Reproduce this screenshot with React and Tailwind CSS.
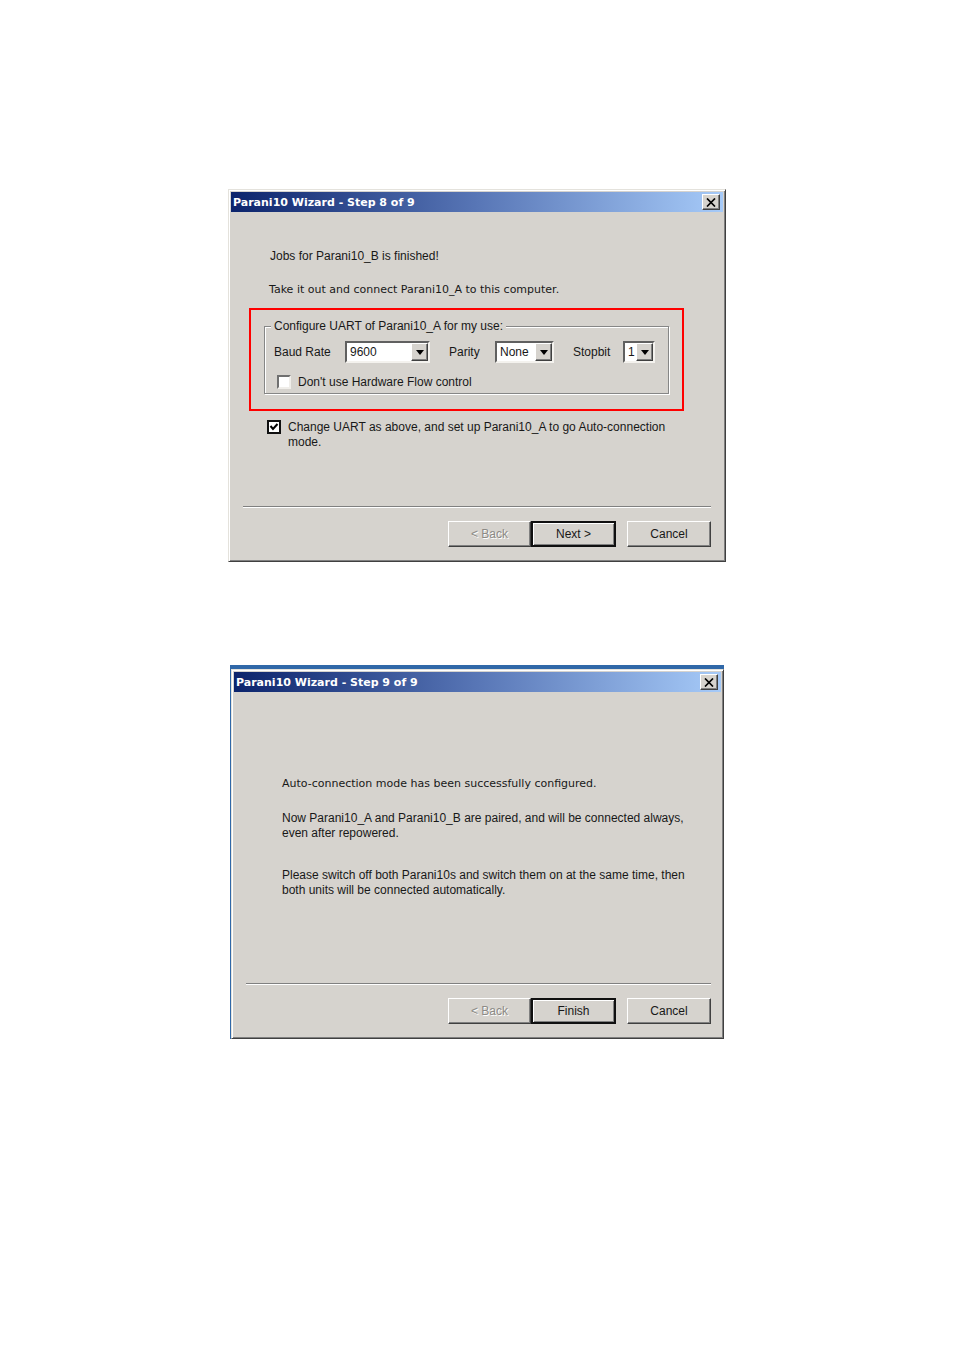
import React, { useState } from 'react';
import clsx from 'clsx';

const RAISED = 'border border-t-white border-l-white border-r-[#404040] border-b-[#404040] shadow-[inset_-1px_-1px_0_#808080]';

function CloseButton() {
  return (
    <button
      aria-label="Close"
      className={clsx('flex h-4 w-[18px] items-center justify-center bg-[#d6d3ce]', RAISED)}
    >
      <svg width="10" height="9" viewBox="0 0 10 9" stroke="#000" strokeWidth="1.7" fill="none">
        <path d="M1 0.5L9 8.5M9 0.5L1 8.5" />
      </svg>
    </button>
  );
}

function WizardWindow({ title, children }) {
  return (
    <section className="border border-t-[#e4e2dc] border-l-[#e4e2dc] border-r-[#404040] border-b-[#404040] bg-[#d6d3ce] p-[2px] shadow-[inset_1px_1px_0_#fff,inset_-1px_-1px_0_#808080]">
      <header className="flex h-5 items-center justify-between bg-linear-to-r/srgb from-[#0c246c] via-[#5876b6] to-[#a6caf8] pr-[3px] pl-[2px]">
        <h1 className="font-['DejaVu_Sans',sans-serif] text-[11px] leading-[15px] font-bold text-white">
          {title}
        </h1>
        <CloseButton />
      </header>
      {children}
    </section>
  );
}

// Win2000 style drop-down: sunken field with a raised arrow on the right
function Combo({ id, label, options, labelClass, className }) {
  return (
    <div className="flex items-center">
      <label htmlFor={id} className={labelClass}>{label}</label>
      <div className={clsx('relative h-[22px] border-2 border-t-[#606060] border-l-[#606060] border-r-[#f4f2ee] border-b-[#f4f2ee] bg-white', className)}>
        <select id={id} className="block h-full w-full appearance-none bg-transparent pl-[3px] leading-[18px] outline-none">
          {options.map(o => <option key={o}>{o}</option>)}
        </select>
        <span className={clsx('pointer-events-none absolute inset-y-0 right-0 flex w-[17px] items-center justify-center bg-[#d6d3ce]', RAISED)}>
          <svg width="8" height="5" viewBox="0 0 8 5">
            <path d="M0 0H8L4 5Z" fill="#000" />
          </svg>
        </span>
      </div>
    </div>
  );
}

function CheckBox({ id, checked, onChange, className }) {
  return (
    <span className="relative flex h-[14px] w-[14px] shrink-0">
      <input
        id={id}
        type="checkbox"
        checked={checked}
        onChange={e => onChange(e.target.checked)}
        className={clsx('h-[14px] w-[14px] appearance-none bg-white', className)}
      />
      {checked && (
        <svg className="pointer-events-none absolute inset-0" width="14" height="14" viewBox="0 0 14 14">
          <path d="M3.5 6L6 9L10.5 4" fill="none" stroke="#000" strokeWidth="2" />
        </svg>
      )}
    </span>
  );
}

function WizardButtons({ next }) {
  return (
    <div className="mt-[13px] mb-3 flex h-[26px] justify-end">
      <button disabled className={clsx('w-[83px] text-[#8c8a86] [text-shadow:1px_1px_0_#fff]', RAISED)}>&lt; Back</button>
      <button className="w-[85px] border-2 border-[#101010] shadow-[inset_1px_1px_0_#fff,inset_-1px_-1px_0_#808080]">{next}</button>
      <button className={clsx('ml-[11px] w-[84px]', RAISED)}>Cancel</button>
    </div>
  );
}

function Divider() {
  return <hr className="h-[2px] border-t border-b border-t-[#808080] border-b-white" />;
}

export default function App() {
  const [noFlow, setNoFlow] = useState(false);
  const [changeUart, setChangeUart] = useState(true);

  return (
    <main className="min-h-screen bg-white pt-[189px] pb-10 font-['Liberation_Sans',Arial,sans-serif] text-[12px] leading-[15px] text-[#181818]">
      <div className="mx-auto max-w-[498px]">
        <WizardWindow title="Parani10 Wizard - Step 8 of 9">
          <p className="pt-[37px] pl-[39px]">Jobs for Parani10_B is finished!</p>
          <p className="mt-[18px] pl-[38px] font-['DejaVu_Sans',sans-serif] text-[11px]">
            Take it out and connect Parani10_A to this computer.
          </p>

          <div className="mt-[11px] mr-[39px] ml-[18px] border-2 border-[#ff0000] px-[13px] pt-[9px] pb-[15px]">
            <fieldset className="border border-[#868686] px-[6px] pb-[3px] shadow-[1px_1px_0_#fff,inset_1px_1px_0_#fff]">
              <legend className="bg-[#d6d3ce] px-[3px]">Configure UART of Parani10_A for my use:</legend>
              <div className="flex gap-[19px] pt-[7px] pl-[3px]">
                <Combo id="baud" label="Baud Rate" options={['9600', '19200', '38400', '57600', '115200']} labelClass="w-[71px]" className="w-[85px]" />
                <Combo id="parity" label="Parity" options={['None', 'Even', 'Odd']} labelClass="w-[46px]" className="w-[59px]" />
                <Combo id="stopbit" label="Stopbit" options={['1', '2']} labelClass="w-[50px]" className="w-[32px]" />
              </div>
              <div className="mt-3 flex gap-[7px] pl-[6px]">
                <CheckBox
                  id="noflow"
                  checked={noFlow}
                  onChange={setNoFlow}
                  className="border-2 border-t-[#707070] border-l-[#707070] border-r-[#f0eeea] border-b-[#f0eeea]"
                />
                <label htmlFor="noflow">Don't use Hardware Flow control</label>
              </div>
            </fieldset>
          </div>

          <div className="mt-[9px] mr-[39px] ml-9 flex gap-[7px]">
            <CheckBox id="change" checked={changeUart} onChange={setChangeUart} className="border-2 border-[#101010]" />
            <label htmlFor="change">
              Change UART as above, and set up Parani10_A to go Auto-connection mode.
            </label>
          </div>

          <div className="mt-14 px-3">
            <Divider />
            <WizardButtons next="Next >" />
          </div>
        </WizardWindow>
      </div>

      {/* a strip of the blue desktop shows above and left of this one */}
      <div className="mx-auto mt-[103px] max-w-[494px] border-t-4 border-l border-[#3068a8]">
        <WizardWindow title="Parani10 Wizard - Step 9 of 9">
          <div className="pt-[84px] pr-6 pl-12">
            <p className="font-['DejaVu_Sans',sans-serif] text-[11px]">
              Auto-connection mode has been successfully configured.
            </p>
            <p className="mt-5">
              Now Parani10_A and Parani10_B are paired, and will be connected always, even after repowered.
            </p>
            <p className="mt-[27px]">
              Please switch off both Parani10s and switch them on at the same time, then both units will be connected automatically.
            </p>
          </div>

          <div className="mt-[85px] pr-[10px] pl-3">
            <Divider />
            <WizardButtons next="Finish" />
          </div>
        </WizardWindow>
      </div>
    </main>
  );
}
